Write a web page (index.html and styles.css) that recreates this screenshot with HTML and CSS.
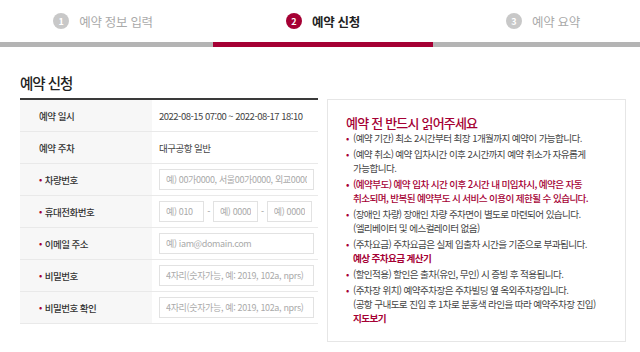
FILE: index.html
```html
<!DOCTYPE html>
<html lang="ko">
<head>
<meta charset="utf-8">
<link rel="stylesheet" href="styles.css">
</head>
<body>
<div class="stepper">
  <div class="steps">
    <div class="step"><span class="num">1</span><span class="label">예약 정보 입력</span></div>
    <div class="step active"><span class="num">2</span><span class="label">예약 신청</span></div>
    <div class="step"><span class="num">3</span><span class="label">예약 요약</span></div>
  </div>
  <div class="progress"><span></span><span class="on"></span><span></span></div>
</div>

<div class="content">
  <section class="form">
    <h2>예약 신청</h2>
    <div class="table">
      <div class="row"><div class="th">예약 일시</div><div class="td">2022-08-15 07:00 ~ 2022-08-17 18:10</div></div>
      <div class="row"><div class="th">예약 주차</div><div class="td">대구공항 일반</div></div>
      <div class="row"><div class="th"><i class="req">•</i>차량번호</div><div class="td"><input class="full" placeholder="예) 00가0000, 서울00가0000, 외교0000"></div></div>
      <div class="row"><div class="th"><i class="req">•</i>휴대전화번호</div><div class="td"><div class="phone"><input placeholder="예) 010"><span class="dash">-</span><input placeholder="예) 0000"><span class="dash">-</span><input placeholder="예) 0000"></div></div></div>
      <div class="row"><div class="th"><i class="req">•</i>이메일 주소</div><div class="td"><input class="full" placeholder="예) iam@domain.com"></div></div>
      <div class="row"><div class="th"><i class="req">•</i>비밀번호</div><div class="td"><input class="full" placeholder="4자리(숫자가능, 예: 2019, 102a, nprs)"></div></div>
      <div class="row"><div class="th"><i class="req">•</i>비밀번호 확인</div><div class="td"><input class="full" placeholder="4자리(숫자가능, 예: 2019, 102a, nprs)"></div></div>
    </div>
  </section>

  <aside class="notice">
    <h3>예약 전 반드시 읽어주세요</h3>
    <ul>
      <li>(예약 기간) 최소 2시간부터 최장 1개월까지 예약이 가능합니다.</li>
      <li>(예약 취소) 예약 입차시간 이후 2시간까지 예약 취소가 자유롭게<br>가능합니다.</li>
      <li class="warn">(예약부도) 예약 입차 시간 이후 2시간 내 미입차시, 예약은 자동<br>취소되며, 반복된 예약부도 시 서비스 이용이 제한될 수 있습니다.</li>
      <li>(장애인 차량) 장애인 차량 주차면이 별도로 마련되어 있습니다.<br>(엘리베이터 및 에스컬레이터 없음)</li>
      <li>(주차요금) 주차요금은 실제 입출차 시간을 기준으로 부과됩니다.<br><a class="link">예상 주차요금 계산기</a></li>
      <li>(할인적용) 할인은 출차(유인, 무인) 시 증빙 후 적용됩니다.</li>
      <li>(주차장 위치) 예약주차장은 주차빌딩 옆 옥외주차장입니다.<br>(공항 구내도로 진입 후 1차로 분홍색 라인을 따라 예약주차장 진입)<br><a class="link">지도보기</a></li>
    </ul>
  </aside>
</div>
</body>
</html>
```

FILE: styles.css
```css
* { box-sizing: border-box; }
html, body { margin: 0; padding: 0; background: #fff; }
body {
  font-family: "Noto Sans CJK KR", "Noto Sans", sans-serif;
  color: #333;
  width: 640px;
  height: 352px;
  overflow: hidden;
}

.stepper {
  width: 660px;
  margin-left: -7px;
}
.steps {
  display: flex;
  height: 42px;
}
.step {
  flex: 1;
  display: flex;
  align-items: center;
  justify-content: center;
  gap: 10px;
  color: #aaa;
  font-size: 12.5px;
  letter-spacing: -0.3px;
}
.step .num {
  width: 16px;
  height: 16px;
  border-radius: 50%;
  background: #c8c8c8;
  color: #fff;
  font-size: 9px;
  font-weight: 700;
  letter-spacing: 0;
  display: flex;
  align-items: center;
  justify-content: center;
  line-height: 1;
}
.step.active { color: #222; font-weight: 700; }
.step.active .num { background: #a50034; }

.progress {
  display: flex;
  height: 5px;
}
.progress span { flex: 1; background: #b4b4b4; }
.progress span.on { background: #a50034; }

.content {
  display: flex;
  align-items: flex-start;
  gap: 9px;
  padding: 0 14px 0 20px;
}

.form { width: 298px; }
.form h2 {
  margin: 0;
  padding-top: 25px;
  height: 51px;
  font-size: 14.5px;
  font-weight: 500;
  letter-spacing: -1px;
  color: #222;
  line-height: 22px;
}
.table { border-top: 2px solid #3a3a3a; }
.row {
  display: grid;
  grid-template-columns: 132px 1fr;
  height: 32px;
  border-bottom: 1px solid #e9e9e9;
}
.th {
  background: #f7f7f7;
  display: flex;
  align-items: center;
  padding-left: 19px;
  font-size: 9.5px;
  letter-spacing: -0.5px;
  font-weight: 500;
  color: #333;
  white-space: nowrap;
}
.req {
  font-style: normal;
  color: #a50034;
  margin-right: 3px;
  font-size: 9px;
}
.td {
  display: flex;
  align-items: center;
  padding-left: 7px;
  font-size: 9.5px;
  letter-spacing: -0.5px;
  color: #444;
  white-space: nowrap;
}
input {
  height: 21px;
  border: 1px solid #e2e2e2;
  padding: 0 6px;
  font-family: inherit;
  font-size: 9px;
  letter-spacing: -0.35px;
  color: #333;
  background: #fff;
  outline: none;
  min-width: 0;
}
input::placeholder { color: #aaa; }
input.full { width: 155px; }
.phone {
  display: flex;
  align-items: center;
  width: 153px;
}
.phone input { flex: 1; width: 0; }
.dash {
  font-size: 9px;
  color: #999;
  padding: 0 3px;
}

.notice {
  width: 299px;
  margin-top: 52px;
  border: 1px solid #e6e6e6;
  padding: 15px 8px 15px 18px;
  height: 243px;
}
.notice h3 {
  margin: 0;
  font-size: 13px;
  letter-spacing: -0.8px;
  font-weight: 500;
  color: #a50034;
  line-height: 16px;
}
.notice ul {
  list-style: none;
  margin: 0;
  padding: 0;
}
.notice li {
  display: grid;
  grid-template-columns: 7px 1fr;
  font-size: 9.6px;
  letter-spacing: -0.6px;
  line-height: 14px;
  color: #444;
  white-space: nowrap;
}
.notice li + li { margin-top: 2px; }
.notice li::before {
  content: "•";
  color: #a50034;
  grid-row: 1 / span 3;
}
.notice li.warn { color: #a50034; font-weight: 500; }
.link { color: #a50034; font-weight: 700; }
```
